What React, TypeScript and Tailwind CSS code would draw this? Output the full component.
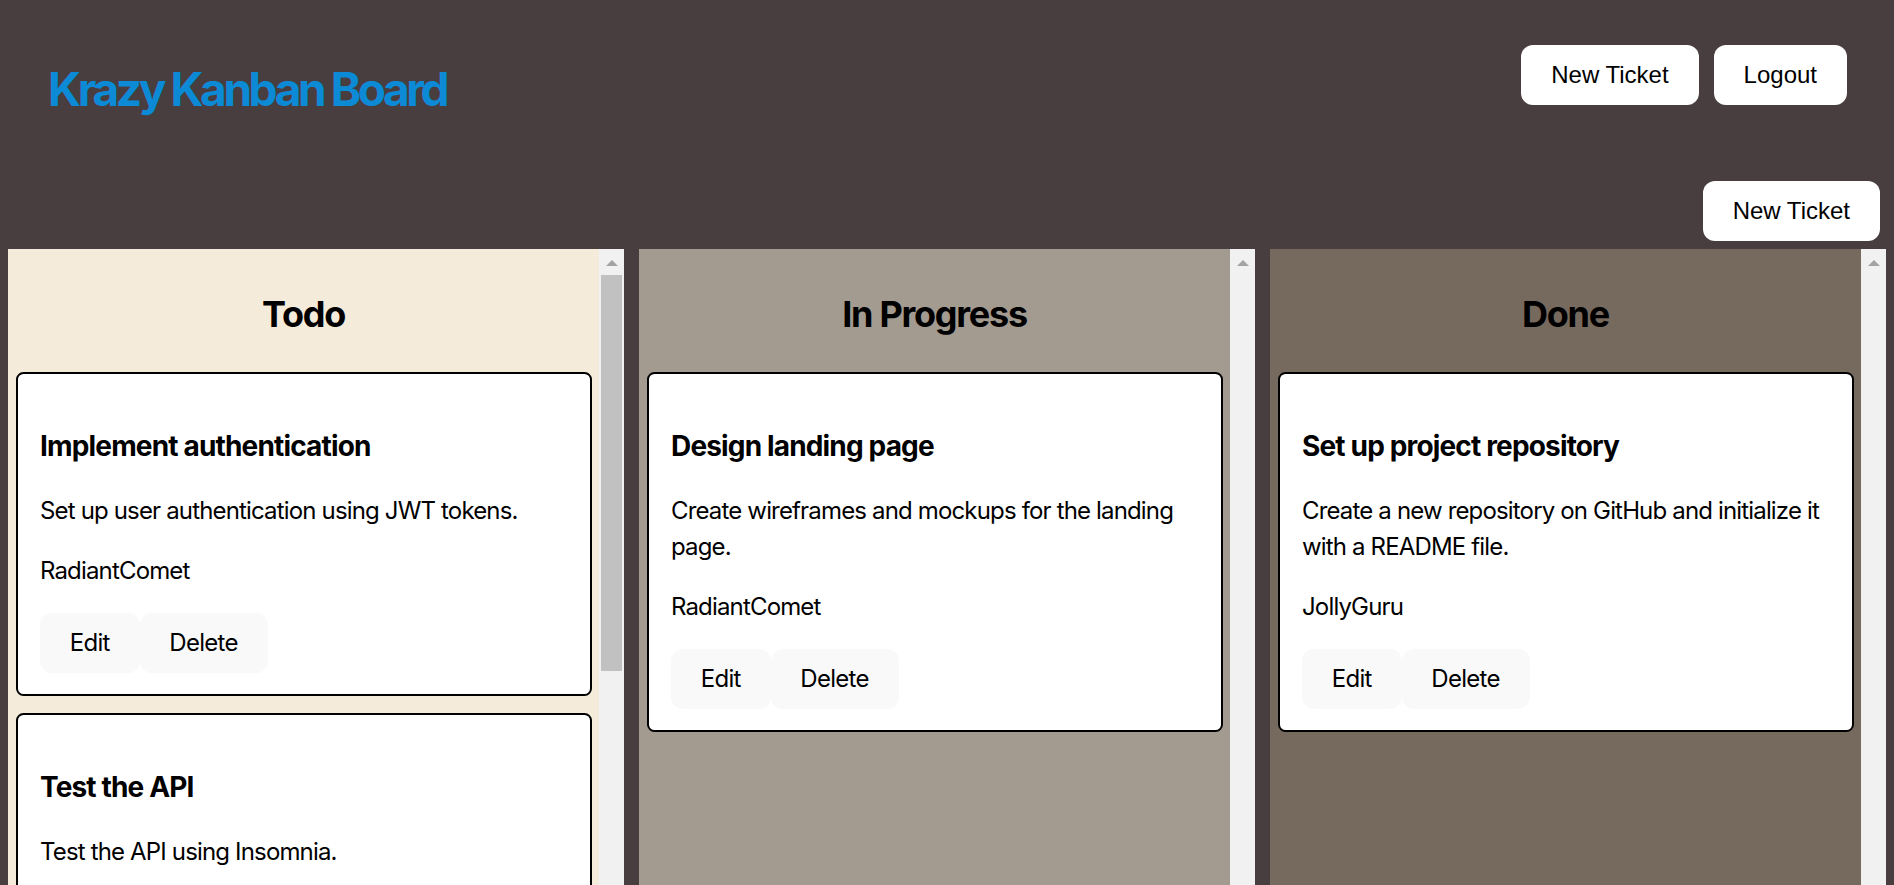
import React from 'react'

type Ticket = {
  id: number
  name: string
  description: string
  assignee: string
}

type Column = {
  title: string
  bg: string
  thumb: boolean
  tickets: Ticket[]
}

const columns: Column[] = [
  {
    title: 'Todo',
    bg: 'bg-[#f4ebda]',
    thumb: true,
    tickets: [
      {
        id: 1,
        name: 'Implement authentication',
        description: 'Set up user authentication using JWT tokens.',
        assignee: 'RadiantComet',
      },
      {
        id: 2,
        name: 'Test the API',
        description: 'Test the API using Insomnia.',
        assignee: 'JollyGuru',
      },
      {
        id: 3,
        name: 'Deploy to Render',
        description: 'Deploy the application to Render using a PostgreSQL database.',
        assignee: 'RadiantComet',
      },
    ],
  },
  {
    title: 'In Progress',
    bg: 'bg-[#a39a90]',
    thumb: false,
    tickets: [
      {
        id: 4,
        name: 'Design landing page',
        description: 'Create wireframes and mockups for the landing page.',
        assignee: 'RadiantComet',
      },
    ],
  },
  {
    title: 'Done',
    bg: 'bg-[#76695e]',
    thumb: false,
    tickets: [
      {
        id: 5,
        name: 'Set up project repository',
        description: 'Create a new repository on GitHub and initialize it with a README file.',
        assignee: 'JollyGuru',
      },
    ],
  },
]

function HeaderButton({ children }: { children: React.ReactNode }) {
  return (
    <button
      type="button"
      className="rounded-[12px] border border-transparent bg-white px-[29px] py-[15px] font-['Liberation_Sans',Arial,sans-serif] text-[24px] leading-[28px] text-black"
    >
      {children}
    </button>
  )
}

function CardButton({ children }: { children: React.ReactNode }) {
  return (
    <button
      type="button"
      className="rounded-[12px] border border-transparent bg-[#f9f9f9] px-[28.8px] py-[14.4px] text-[24px] leading-[29px] tracking-[-0.03em]"
    >
      {children}
    </button>
  )
}

function TicketCard({ ticket }: { ticket: Ticket }) {
  return (
    <div className="rounded-[7.5px] border-2 border-black bg-white px-[22.5px] pt-[51px] pb-[21px] text-black">
      <h3 className="mb-[26px] text-[28px] leading-[42px] font-bold tracking-[-0.03em]">
        {ticket.name}
      </h3>
      <p className="mb-[24px] text-[24px] leading-[36px] tracking-[-0.035em]">
        {ticket.description}
      </p>
      <p className="mb-[24px] text-[24px] leading-[36px] tracking-[-0.035em]">{ticket.assignee}</p>
      <div className="flex">
        <CardButton>Edit</CardButton>
        <CardButton>Delete</CardButton>
      </div>
    </div>
  )
}

function Scrollbar({ thumb }: { thumb: boolean }) {
  return (
    <div className="flex w-[25px] shrink-0 flex-col items-center bg-[#f1f1f1]">
      <div className="h-[25px] pt-[11px]">
        <svg width="12" height="6" viewBox="0 0 12 6">
          <polygon points="6,0 12,6 0,6" fill="#a3a3a3" />
        </svg>
      </div>
      {thumb && <div className="mt-[1px] h-[396px] w-[21px] bg-[#c1c1c1]" />}
    </div>
  )
}

function Swimlane({ column }: { column: Column }) {
  return (
    <div className={`flex h-[708px] min-w-0 flex-1 ${column.bg}`}>
      <div className="min-w-0 flex-1 overflow-hidden px-[7.5px] pt-[38px]">
        <h2 className="mb-[31px] text-center text-[36px] leading-[54px] font-bold tracking-[-0.035em] text-black">
          {column.title}
        </h2>
        <div className="flex flex-col gap-[17px]">
          {column.tickets.map((t) => (
            <TicketCard key={t.id} ticket={t} />
          ))}
        </div>
      </div>
      <Scrollbar thumb={column.thumb} />
    </div>
  )
}

export default function App() {
  return (
    <div className="h-screen overflow-hidden bg-[#483e3f] font-['Inter',sans-serif]">
      <header className="flex h-[181px] items-start justify-between pt-[45px] pr-[47px] pl-[48px]">
        <h1 className="mt-[19px] text-[46px] leading-[1.1] font-bold tracking-[-0.074em] text-[#0c8ad6]">
          Krazy Kanban Board
        </h1>
        <div className="flex gap-[15px]">
          <HeaderButton>New Ticket</HeaderButton>
          <HeaderButton>Logout</HeaderButton>
        </div>
      </header>
      <div className="flex justify-end pr-[14px]">
        <HeaderButton>New Ticket</HeaderButton>
      </div>
      <div className="mt-[8px] flex gap-[15px] px-[8px]">
        {columns.map((c) => (
          <Swimlane key={c.title} column={c} />
        ))}
      </div>
    </div>
  )
}
